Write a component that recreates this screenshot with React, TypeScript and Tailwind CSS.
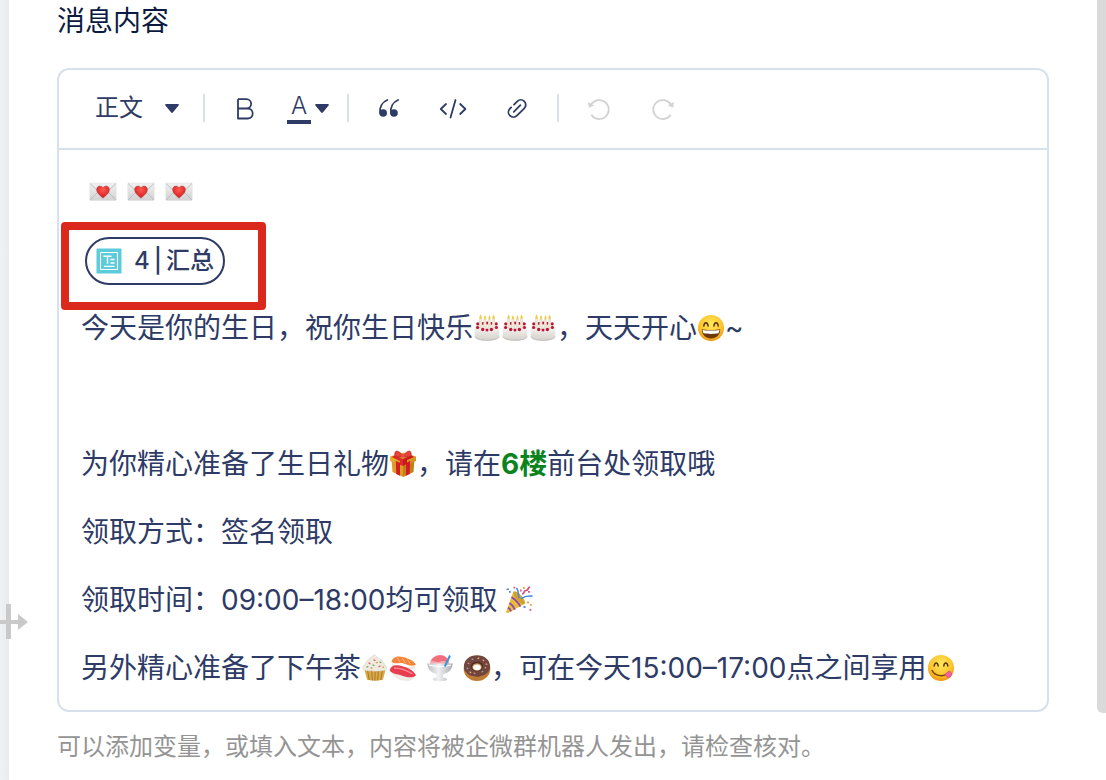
import React from 'react'

type IconProps = { className?: string }

// Shared gradients for the emoji drawings
function EmojiDefs() {
  return (
    <svg className="absolute h-0 w-0" aria-hidden="true">
      <defs>
        <linearGradient id="paper" x1="0" y1="0" x2="0" y2="1">
          <stop offset="0" stopColor="#f1f1f1" />
          <stop offset="1" stopColor="#d2d2d3" />
        </linearGradient>
        <radialGradient id="heart" cx=".5" cy=".3" r=".7">
          <stop offset="0" stopColor="#ff5a4f" />
          <stop offset="1" stopColor="#d3171d" />
        </radialGradient>
        <radialGradient id="face" cx=".5" cy=".35" r=".65">
          <stop offset="0" stopColor="#ffe95c" />
          <stop offset=".65" stopColor="#fdc52d" />
          <stop offset="1" stopColor="#ee9612" />
        </radialGradient>
        <linearGradient id="cream" x1="0" y1="0" x2="0" y2="1">
          <stop offset="0" stopColor="#f6f3ef" />
          <stop offset="1" stopColor="#d3cfca" />
        </linearGradient>
        <linearGradient id="gold" x1="0" y1="0" x2="1" y2="1">
          <stop offset="0" stopColor="#f3bd35" />
          <stop offset="1" stopColor="#c8861a" />
        </linearGradient>
        <linearGradient id="glass" x1="0" y1="0" x2="1" y2="0">
          <stop offset="0" stopColor="#bcbec2" />
          <stop offset=".45" stopColor="#f0f1f3" />
          <stop offset="1" stopColor="#a9acb1" />
        </linearGradient>
      </defs>
    </svg>
  )
}

function Emoji({ label, className = '', children }: { label: string; className?: string; children: React.ReactNode }) {
  return (
    <svg viewBox="0 0 28 28" role="img" aria-label={label} className={`inline-block h-7 w-7 shrink-0 align-[-4px] ${className}`}>
      {children}
    </svg>
  )
}

function LoveLetter() {
  return (
    <Emoji label="💌">
      <rect x=".8" y="5" width="26.4" height="17.500" rx=".8" fill="url(#paper)" stroke="#dcdcdc" strokeWidth=".5" />
      <path d="M1 5.500l9.500 9M27 5.500l-9.500 9M1 22l8.500-8.500M27 22l-8.500-8.500" stroke="#b4b5b8" strokeWidth=".8" fill="none" />
      <path d="M14 20.2c-2-1.8-6.400-4.800-6.400-8.600 0-2 1.500-3.600 3.300-3.600 1.300 0 2.500.7 3.100 1.900.6-1.200 1.800-1.900 3.100-1.900 1.800 0 3.300 1.600 3.300 3.600 0 3.800-4.400 6.800-6.400 8.600z" fill="url(#heart)" stroke="#9c3438" strokeWidth=".4" />
    </Emoji>
  )
}

function Cake() {
  return (
    <Emoji label="🎂">
      <path d="M1.700 13.500v9c0 2.600 5.500 4.300 12.300 4.300s12.300-1.700 12.300-4.300v-9z" fill="url(#cream)" />
      <ellipse cx="14" cy="13" rx="12.300" ry="5" fill="#f1ede8" />
      <g fill="#ba1637">
        <circle cx="4.800" cy="9.800" r="1.600" />
        <circle cx="10" cy="9.400" r="1.400" />
        <circle cx="14.100" cy="9" r="1.400" />
        <circle cx="18.200" cy="9.400" r="1.400" />
        <circle cx="23.200" cy="9.800" r="1.600" />
      </g>
      <g fill="#f1e8d4" stroke="#cfc7bb" strokeWidth=".3">
        <rect x="6.400" y="4.500" width="2.500" height="9" />
        <rect x="10.600" y="5.500" width="2.500" height="9" />
        <rect x="15.200" y="5.500" width="2.500" height="9" />
        <rect x="19.300" y="4.500" width="2.500" height="9" />
      </g>
      <path
        d="M7.600.4c1.600 2.400 1.500 4.600 0 4.600s-1.600-2.200 0-4.600zM12 1c1.400 2.400 1.300 4.600 0 4.600S10.600 3.400 12 1zM16.500 1c1.400 2.400 1.300 4.600 0 4.600s-1.400-2.200 0-4.600zM20.600.4c1.600 2.400 1.500 4.600 0 4.600s-1.600-2.200 0-4.600z"
        fill="#f0cb45"
      />
      <g fill="#ba1637">
        <circle cx="4.600" cy="13.500" r="1.600" />
        <circle cx="9.700" cy="15.500" r="1.700" />
        <circle cx="14" cy="16" r="1.500" />
        <circle cx="18.400" cy="15.500" r="1.700" />
        <circle cx="23.400" cy="13.500" r="1.600" />
      </g>
      <path d="M1.900 22.500c1 2.500 6 3.700 12.100 3.700s11.100-1.200 12.100-3.700" fill="none" stroke="#c2beb9" strokeWidth=".9" />
    </Emoji>
  )
}

function Grin() {
  return (
    <Emoji label="😄">
      <circle cx="14" cy="14" r="13" fill="url(#face)" />
      <path d="M6.800 12c.5-4.300 3.800-4.300 4.300 0M16.900 12c.5-4.300 3.800-4.300 4.300 0" fill="none" stroke="#5b3207" strokeWidth="1.500" strokeLinecap="round" />
      <path d="M4.800 15.300c3 1 15.400 1 18.400 0 .2 5.500-4 9.200-9.200 9.200s-9.400-3.700-9.200-9.200z" fill="#6d3b0a" />
      <path d="M5.500 16c4 .8 13 .8 17 0-.2 1.500-.7 2.700-1.200 3.300-4 .8-10.600.8-14.600 0-.6-.8-1-1.800-1.200-3.300z" fill="#fff" />
    </Emoji>
  )
}

function Yum() {
  return (
    <Emoji label="😋">
      <circle cx="14" cy="14" r="13" fill="url(#face)" />
      <path d="M7.200 12c.5-4 3.500-4 4 0M16.800 12c.5-4 3.500-4 4 0" fill="none" stroke="#5b3207" strokeWidth="1.500" strokeLinecap="round" />
      <path d="M5.200 16.500c3 6.400 13 6.800 17 1.400" fill="none" stroke="#74400b" strokeWidth="1.500" strokeLinecap="round" />
      <path d="M18 20.500c1-1.500 3-2.900 4.600-3.500 1.600 1 2.700 3.200 1.700 4.900-1.100 1.900-3.500 1.900-4.800.6z" fill="#f3609f" stroke="#d53c80" strokeWidth=".5" />
    </Emoji>
  )
}

function Gift() {
  return (
    <Emoji label="🎁">
      <path d="M2.500 9.500L14 13.500v13.500L3.500 22z" fill="#dc9d25" />
      <path d="M25.500 9.500L14 13.500v13.500L24.500 22z" fill="#c58119" />
      <path d="M1 6.500l13-4 13 4v4.500L14 16 1 11z" fill="url(#gold)" />
      <path d="M6.800 11l4.200 1.700v13L7.300 23.900zM21.200 11L17 12.700v13l3.700-1.800z" fill="#d41d22" />
      <path d="M5.500 5.500L16 9.800v5.600L14 16l-3-1.300V11L2.500 7z" fill="#df2b27" />
      <path d="M22.500 5.500L14 9v6.500l4-1.500v-4L25 7z" fill="#c8191f" />
      <path d="M14 6.500C10 7.500 6 7.600 5.800 5 5.500 2 7 .5 8.500 1.200 11 2 13 4 14 6.500zM14 6.500c4 1 8 1.100 8.200-1.500C22.500 2 21 .5 19.500 1.200 17 2 15 4 14 6.500z" fill="#e9403b" stroke="#a91519" strokeWidth=".6" />
      <circle cx="14" cy="5.800" r="2" fill="#e94b43" />
    </Emoji>
  )
}

function Party() {
  return (
    <Emoji label="🎉">
      <path d="M1.200 25.500L8.500 5.500c3 .5 9.500 6 11 12.500L3 27c-1.200.3-2-.4-1.800-1.500z" fill="#edbc35" />
      <path d="M6.500 11c3.500 2.500 7.400 6.300 8.800 9.600M4.500 17c2.500 1.500 4.500 4 5.400 6.600M3 21.500c1.300.8 2.600 2.400 3 4" fill="none" stroke="#8a48b8" strokeWidth="1.800" />
      <ellipse cx="14" cy="11.800" rx="3.200" ry="8.200" transform="rotate(-42 14 11.800)" fill="#d4a12b" />
      <path d="M14 12c-1-4 0-7-2.500-10M16 12.500c4-2.500 7-3 11.500-2.300" fill="none" stroke="#498be0" strokeWidth="1.700" />
      <path d="M17 8c3 0 1-3.500 4-3.500s1.500-3.500 4-3.500" fill="none" stroke="#dc4b72" strokeWidth="1.700" />
      <g fill="#e05a82">
        <rect x="8.500" y=".8" width="1.800" height="1.800" />
        <rect x="15" y="3.500" width="1.600" height="2" />
        <rect x="24.500" y="23" width="1.800" height="1.800" />
        <rect x="23" y="5" width="2" height="1.700" />
      </g>
      <g fill="#4f8edb">
        <rect x="1.500" y="2.500" width="2.400" height="1.600" />
        <rect x="4" y="5" width="1.800" height="1.800" />
        <rect x="18.500" y="20" width="2" height="2" />
      </g>
      <g fill="#ef9c47">
        <rect x="22" y="15.500" width="2" height="1.800" />
        <rect x="25" y="18" width="1.800" height="1.800" />
        <rect x="18" y="1" width="1.800" height="1.800" />
      </g>
    </Emoji>
  )
}

function Cupcake() {
  return (
    <Emoji label="🧁">
      <path d="M3 14h22l-3 11.500c-2 1.500-14 1.500-16 0z" fill="#d9aa48" />
      <path d="M6.500 16l1.800 10M10.500 16l.9 10.500M14 16v10.500M17.500 16l-.9 10.500M21.500 16l-1.800 10" stroke="#a9772a" strokeWidth="1" />
      <path d="M2.500 15.500c-1.500-2.500 0-4.500 2-5-.3-2.500 1-4 3-4.200C8 3.500 11 3.200 13.200.8c2 .8 2.800 2 2.600 3.200 2.700-.2 4.600 1 4.600 3 2 .2 3.200 2 2.700 3.800 2.300.7 3.500 2.700 2.300 4.700-2.500 2.200-20.500 2.200-22.900 0z" fill="#efebe1" stroke="#d0cabd" strokeWidth=".5" />
      <g strokeWidth="1.300" strokeLinecap="round">
        <path d="M8 9l.9.600M18 12.500l1-.4M13 6l.9.400" stroke="#df5571" />
        <path d="M12 11l1 .3M19 8l.9.500M6 13l.8-.4" stroke="#62a860" />
        <path d="M10 13.800l.9.200M15.500 8.800l.8-.4M22 13l.6.300" stroke="#d89a43" />
      </g>
    </Emoji>
  )
}

function Sushi() {
  return (
    <Emoji label="🍣">
      <path d="M3 9c4 4 16 5.500 23.500 2.500l-1 3.500C18 17 7 15 3.500 12z" fill="#e9e8e3" />
      <path d="M2.500 7.500C4 2.500 9 1.600 14 3c5 1.300 11 3.400 13 7.800-5 2.500-9-.5-13-1.500-4.500-1.100-8 1.700-11.500-1.800z" fill="#f7843b" />
      <path d="M8 3.500l3 4.500M13 4l3.500 5M18.500 5.500l3 4.500" stroke="#ffc08c" strokeWidth=".9" />
      <path d="M1.500 17c5 4 17 7.500 24.500 4.500-.5 3-3 5.500-8 5.500-7.500 0-14-3.300-16.500-10z" fill="#edece8" />
      <path d="M.6 16.500c1-4.500 5-6 10.500-4.800 6 1.200 13.500 4 16 9.800-4.500 3.300-10.100 1.400-14.600-.1C8 19.900 3.500 20.200.6 16.500z" fill="#e73d50" />
      <path d="M5 14c6 0 13 2.500 18.500 6" stroke="#ff8990" strokeWidth="1.300" fill="none" />
    </Emoji>
  )
}

function ShavedIce() {
  return (
    <Emoji label="🍧" className="mx-[9px]">
      <path d="M4 10C4 4 9 1.300 14 1.300S23 5 23.500 10z" fill="#f5acb0" />
      <path d="M5 7.500C7 3 11 1.300 14 1.300c4 0 7.300 2 8.500 5.700-3 2-5-1-8 .5-3 1.600-5.500-1-9.500 0z" fill="#f06f7b" />
      <path d="M1.200 9.500h25.600c-.7 6-4 9.500-9.200 10.600l-1 3.400c3 .3 4.600 1.100 4.600 2s-3.200 1.700-7.200 1.700-7.200-.8-7.200-1.700 1.600-1.700 4.600-2l-1-3.400C5.200 19 1.900 15.500 1.200 9.500z" fill="url(#glass)" />
      <path d="M3 11c5 1.700 17 1.700 22 0" fill="none" stroke="#fff" strokeWidth="1.200" />
      <path d="M24 1.500L18.800 12.500" stroke="#3b94d6" strokeWidth="2" />
    </Emoji>
  )
}

function Donut() {
  return (
    <Emoji label="🍩">
      <ellipse cx="14" cy="15" rx="13.300" ry="12" fill="#bd7b34" />
      <path d="M14 1.200C6.500 1.200.9 6 .9 12.500c0 5 2.500 5.500 4.300 7.700 1.800 2 4.300 1 7 2.200 3.300 1.200 5.200-.6 8-1.200 3.200-.8 6.900-4 6.900-8.700C27.100 6 21.500 1.200 14 1.200z" fill="#73463d" />
      <ellipse cx="14" cy="12.500" rx="6" ry="4.800" fill="#4f2a22" />
      <ellipse cx="14" cy="13" rx="4.800" ry="3.800" fill="#c79258" />
      <ellipse cx="14" cy="13.300" rx="3.800" ry="2.900" fill="#fff" />
      <g strokeWidth="1.100" strokeLinecap="round">
        <path d="M5 9l1 .6M20 6l.9.700M11 19l1 .4M22 14l.9-.5" stroke="#e88da6" />
        <path d="M9 5l1 .4M4 14l.8.700M19 18l.8-.6" stroke="#86b7d7" />
        <path d="M15 4.500l.9-.4M7 18l.7.700M23 10l.9.300" stroke="#ecd378" />
      </g>
    </Emoji>
  )
}

function Caret() {
  return (
    <svg viewBox="0 0 14 9" className="pointer-events-none h-[9px] w-[14px] shrink-0" fill="currentColor" aria-hidden="true">
      <path d="M1 0h12c.8 0 1.100.9.6 1.500L7.800 8.500c-.4.500-1.200.5-1.600 0L.4 1.500C-.1.900.2 0 1 0z" />
    </svg>
  )
}

function BoldIcon() {
  return (
    <svg viewBox="0 0 20 24" className="h-6 w-5" fill="none" stroke="currentColor" strokeWidth="1.800" strokeLinejoin="round" aria-hidden="true">
      <path d="M3 3.200h8.500a4.600 4.600 0 0 1 0 9.300H3M11.500 12.500h1.200a5 5 0 0 1 0 10H3V3.200" />
    </svg>
  )
}

function QuoteIcon() {
  return (
    <svg viewBox="0 0 24 24" className="h-6 w-6" fill="none" aria-hidden="true">
      <g fill="currentColor">
        <circle cx="6.200" cy="17" r="3.800" />
        <circle cx="17" cy="17" r="3.800" />
      </g>
      <path d="M3.200 17.300C2.200 10.800 5.500 6 10.300 4M14 17.300C13 10.800 16.300 6 21.100 4" stroke="currentColor" strokeWidth="1.800" strokeLinecap="round" />
    </svg>
  )
}

function CodeIcon() {
  return (
    <svg viewBox="0 0 28 24" className="h-6 w-7 shrink-0" fill="none" stroke="currentColor" strokeWidth="1.800" strokeLinecap="round" strokeLinejoin="round" aria-hidden="true">
      <path d="M7 8l-5.200 5L7 18M21.200 8l5.200 5-5.200 5M16.500 4L11.500 21.500" />
    </svg>
  )
}

function LinkIcon() {
  return (
    <svg viewBox="0 0 24 24" className="h-6 w-6" fill="none" stroke="currentColor" strokeWidth="1.800" strokeLinecap="round" aria-hidden="true">
      <path d="M9 8.600l3.300-3.300a4.900 4.900 0 0 1 7 7L16 15.600" />
      <path d="M15.200 16.400l-3.300 3.300a4.900 4.900 0 0 1-7-7l1.300-1.300" />
      <path d="M8.800 15.800l6.600-6.600" />
    </svg>
  )
}

function UndoIcon({ className = '' }: IconProps) {
  return (
    <svg viewBox="0 0 24 24" className={`h-6 w-6 ${className}`} fill="none" stroke="currentColor" strokeWidth="1.800" aria-hidden="true">
      <path d="M4 8.800a9.500 9.500 0 1 1 .3 10" />
      <path d="M1.200 6l.6 5.800 5.300-2.300z" fill="currentColor" stroke="none" />
    </svg>
  )
}

// Text-field badge shown inside a variable tag
function FieldIcon() {
  return (
    <svg viewBox="0 0 26 26" className="h-[26px] w-[26px] shrink-0" fill="none" stroke="#fff" aria-hidden="true">
      <rect width="26" height="26" rx="1.500" fill="#5ccbdb" />
      <rect x="4.500" y="4.500" width="17" height="17" rx=".5" strokeWidth="1.100" />
      <path d="M7.500 8.300h8M11.500 8.300v7.400" strokeWidth="1.500" />
      <path d="M14.500 11.500h4M14.500 15h4M8 18.300h10.500" strokeWidth="1.300" />
    </svg>
  )
}

function ResizeHandle() {
  return (
    <button type="button" aria-label="调整宽度" className="absolute top-[604px] left-0 h-9 w-7 cursor-col-resize text-[#c9c9c9]">
      <svg viewBox="0 0 28 36" className="h-9 w-7" fill="currentColor" aria-hidden="true">
        <path d="M6 0h5v16h7v-6l10 8-10 8v-6h-7v15H6V20H0v-4h6z" />
      </svg>
    </button>
  )
}

function Divider({ className = '' }: IconProps) {
  return <span className={`h-7 w-0.5 shrink-0 bg-[#d7e1eb] ${className}`} />
}

const iconButton = 'flex h-8 w-6 shrink-0 items-center justify-center'

function Toolbar() {
  return (
    <div role="toolbar" className="flex h-20 items-center border-b-2 border-[#d7e1eb] pb-0.5 pl-9">
      <label className="flex items-center gap-[22px]">
        <select aria-label="段落样式" defaultValue="正文" className="w-12 appearance-none bg-transparent text-2xl leading-8 outline-none">
          <option>正文</option>
        </select>
        <Caret />
      </label>
      <Divider className="mx-6" />
      <div className="flex items-center gap-[26px]">
        <button type="button" aria-label="加粗" className="flex h-8 w-8 items-center justify-center">
          <BoldIcon />
        </button>
        <button type="button" aria-label="文字颜色" className="flex items-center gap-1">
          <span className="flex h-8 w-6 items-end justify-center border-b-4 border-[#2d3b66] text-2xl leading-7 font-light">A</span>
          <Caret />
        </button>
      </div>
      <Divider className="mr-7 ml-[18px]" />
      <div className="flex items-center gap-10">
        <button type="button" aria-label="引用" className={iconButton}>
          <QuoteIcon />
        </button>
        <button type="button" aria-label="代码" className={iconButton}>
          <CodeIcon />
        </button>
        <button type="button" aria-label="链接" className={iconButton}>
          <LinkIcon />
        </button>
      </div>
      <Divider className="mx-7" />
      <div className="flex items-center gap-10 text-[#d2d2d2]">
        <button type="button" aria-label="撤销" disabled className={iconButton}>
          <UndoIcon />
        </button>
        <button type="button" aria-label="重做" disabled className={iconButton}>
          <UndoIcon className="-scale-x-100" />
        </button>
      </div>
    </div>
  )
}

function VariableTag({ step, name }: { step: string; name: string }) {
  return (
    <span className="ml-1 flex h-12 items-center gap-3 rounded-full border-2 border-[#2d3b66] px-[9px] text-2xl font-medium">
      <FieldIcon />
      <span className="leading-8">
        {step}
        <span className="px-1">|</span>
        {name}
      </span>
    </span>
  )
}

export default function App() {
  return (
    <div className="relative flex min-h-screen bg-white font-['Inter','Noto_Sans_CJK_SC',sans-serif] text-[#2d3b66]">
      <EmojiDefs />
      <aside className="w-[9px] shrink-0 bg-linear-to-r from-[#f0f1f3] to-[#eaebed]" />
      <ResizeHandle />

      <main className="min-w-0 flex-1 px-12">
        <h2 id="message-label" className="text-[28px] leading-[42px] text-[#0c1a41]">消息内容</h2>

        <section className="mt-[26px] rounded-xl border-2 border-[#d7e1eb]">
          <Toolbar />
          <div
            role="textbox"
            aria-multiline="true"
            aria-labelledby="message-label"
            contentEditable
            suppressContentEditableWarning
            spellCheck={false}
            className="px-[22px] py-2 text-[28px] leading-[68px] outline-none"
          >
            <p className="flex h-[68px] items-center gap-[10px] pl-2">
              <LoveLetter />
              <LoveLetter />
              <LoveLetter />
            </p>
            <div className="relative flex h-[68px] items-center pt-0.5">
              <VariableTag step="4" name="汇总" />
              {/* Highlight frame around the variable */}
              <span className="pointer-events-none absolute -top-1 -bottom-4 -left-5 w-[205px] rounded-sm border-8 border-[#db281c]" />
            </div>
            <p>
              今天是你的生日，祝你生日快乐<Cake /><Cake /><Cake />，天天开心<Grin />~
            </p>
            <p className="h-[68px]" />
            <p>
              为你精心准备了生日礼物<Gift />，请在<strong className="font-bold text-[#0b8420]">6楼</strong>前台处领取哦
            </p>
            <p>领取方式：签名领取</p>
            <p>
              领取时间：09:00–18:00均可领取 <Party />
            </p>
            <p>
              另外精心准备了下午茶<Cupcake /><Sushi /><ShavedIce /><Donut />，可在今天15:00–17:00点之间享用<Yum />
            </p>
          </div>
        </section>

        <p className="mt-5 text-2xl leading-[30px] text-[#949494]">
          可以添加变量，或填入文本，内容将被企微群机器人发出，请检查核对。
        </p>
      </main>

      <div className="mb-[67px] w-[9px] shrink-0 rounded-bl-md bg-[#dadada]" />
    </div>
  )
}
